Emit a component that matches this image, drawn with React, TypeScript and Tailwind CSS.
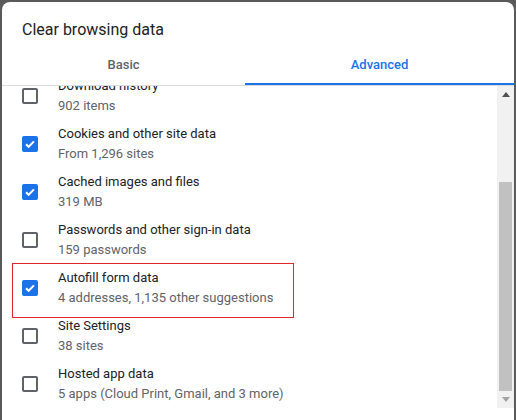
const rows = [
  { title: "Download history", sub: "902 items", checked: false },
  { title: "Cookies and other site data", sub: "From 1,296 sites", checked: true },
  { title: "Cached images and files", sub: "319 MB", checked: true },
  { title: "Passwords and other sign-in data", sub: "159 passwords", checked: false },
  { title: "Autofill form data", sub: "4 addresses, 1,135 other suggestions", checked: true },
  { title: "Site Settings", sub: "38 sites", checked: false },
  { title: "Hosted app data", sub: "5 apps (Cloud Print, Gmail, and 3 more)", checked: false },
];

function Checkbox({ checked }: { checked: boolean }) {
  if (checked) {
    return (
      <div className="flex h-[16px] w-[16px] shrink-0 items-center justify-center rounded-[2px] bg-[#1a73e8]">
        <svg width="12" height="12" viewBox="0 0 12 12" fill="none">
          <path d="M2 6.2l2.6 2.6L10 3.4" stroke="white" strokeWidth="2" />
        </svg>
      </div>
    );
  }
  return <div className="h-[16px] w-[16px] shrink-0 rounded-[2px] border-2 border-[#5f6368]" />;
}

export default function App() {
  return (
    <div className="h-[420px] w-[516px] overflow-hidden bg-[#5a5a5a] pl-[2px] pr-[2px] pt-[2px] font-['Roboto',sans-serif]">
      <div className="flex h-full flex-col rounded-t-[8px] bg-white">
        <div className="px-[20px] pt-[18px] text-[16px] leading-[20px] text-[#202124]">Clear browsing data</div>

        <div className="flex border-b border-[#dadce0] text-[13px] font-medium leading-[16px]">
          <div className="h-[45px] w-[243px] border-b-2 border-transparent pt-[17px] text-center text-[#5f6368]">Basic</div>
          <div className="h-[45px] flex-1 border-b-2 border-[#1a73e8] pt-[17px] text-center text-[#1a73e8]">Advanced</div>
        </div>

        <div className="relative flex h-[322px] overflow-hidden">
          <div className="flex-1 overflow-hidden">
            <div className="-mt-[14px]">
              {rows.map((row) => (
                <div className="flex h-[48px] items-center gap-[20px] pl-[20px]" key={row.title}>
                  <Checkbox checked={row.checked} />
                  <div className="text-[13px] leading-[20px]">
                    <div className="text-[#202124]">{row.title}</div>
                    <div className="text-[#5f6368]">{row.sub}</div>
                  </div>
                </div>
              ))}
            </div>
          </div>

          <div className="flex w-[17px] flex-col bg-[#f1f1f1]">
            <div className="flex h-[17px] items-center justify-center">
              <svg width="8" height="5" viewBox="0 0 8 5">
                <path d="M0 5L4 0L8 5Z" fill="#505050" />
              </svg>
            </div>
            <div className="flex-1" />
            <div className="mx-[2px] h-[209px] bg-[#c1c1c1]" />
            <div className="flex h-[17px] items-center justify-center">
              <svg width="8" height="5" viewBox="0 0 8 5">
                <path d="M0 0L8 0L4 5Z" fill="#a3a3a3" />
              </svg>
            </div>
          </div>

          <div className="absolute left-[10px] top-[177px] h-[55px] w-[282px] border border-[#e0262b]" />
        </div>
      </div>
    </div>
  );
}
